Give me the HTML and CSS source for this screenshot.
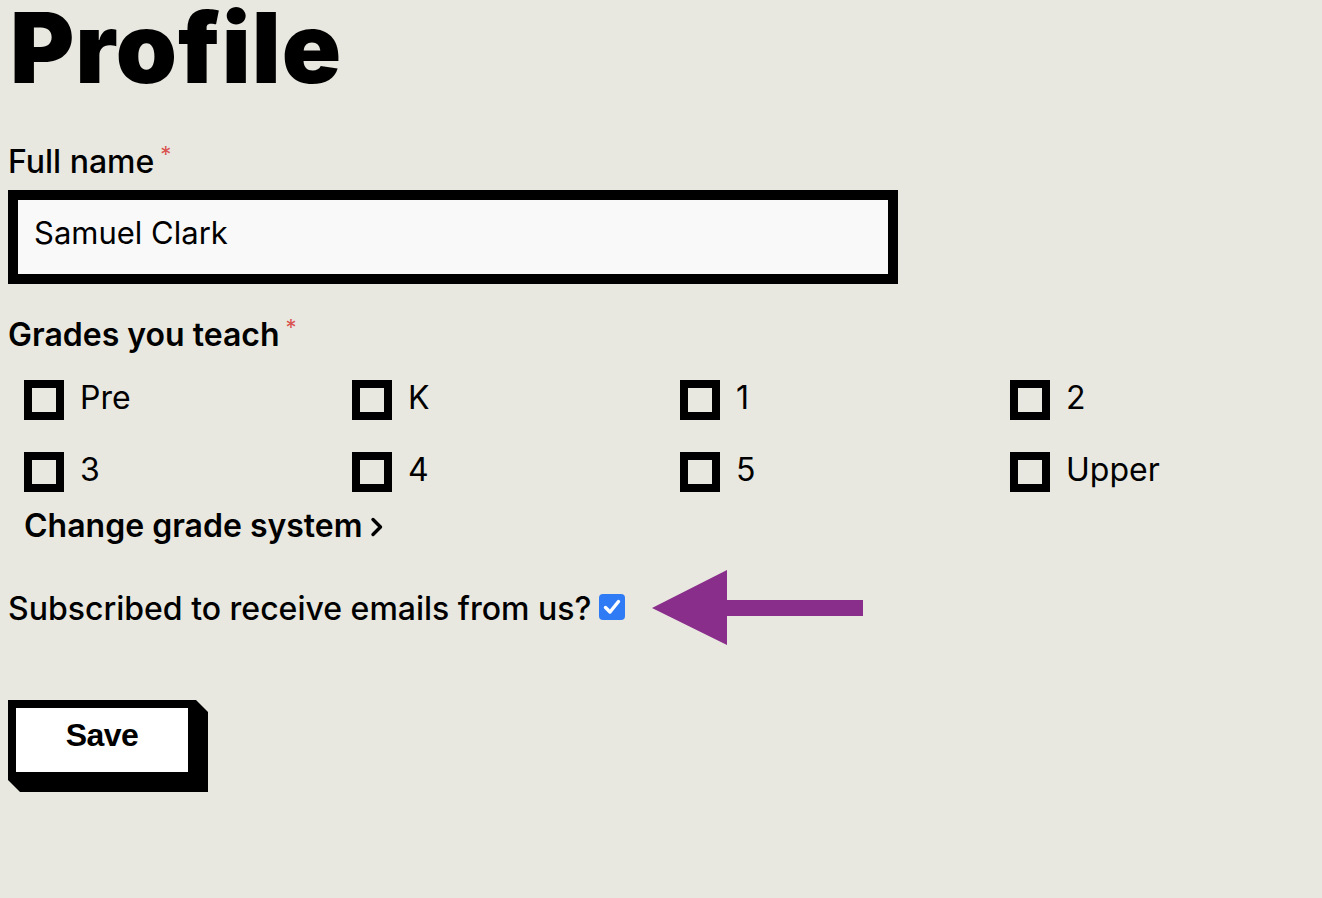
FILE: index.html
```html
<!DOCTYPE html>
<html lang="en">
<head>
<meta charset="utf-8">
<title>Profile</title>
<link rel="stylesheet" href="styles.css">
</head>
<body>
<main class="page">
  <h1 class="title">Profile</h1>
  <form class="form">
    <div class="field field-name">
      <label class="label" for="fullname">Full name<span class="req">*</span></label>
      <input class="text-input" id="fullname" type="text" value="Samuel Clark">
    </div>
    <div class="field field-grades">
      <div class="label label-strong">Grades you teach<span class="req">*</span></div>
      <div class="grades">
        <label class="grade"><span class="box"></span><span class="grade-text">Pre</span></label>
        <label class="grade"><span class="box"></span><span class="grade-text">K</span></label>
        <label class="grade"><span class="box"></span><span class="grade-text">1</span></label>
        <label class="grade"><span class="box"></span><span class="grade-text">2</span></label>
        <label class="grade"><span class="box"></span><span class="grade-text">3</span></label>
        <label class="grade"><span class="box"></span><span class="grade-text">4</span></label>
        <label class="grade"><span class="box"></span><span class="grade-text">5</span></label>
        <label class="grade"><span class="box"></span><span class="grade-text">Upper</span></label>
      </div>
      <a class="change-link" href="#">Change grade system<svg class="chevron" width="14" height="20" viewBox="0 0 14 20"><path d="M3 2.5 L10.5 10 L3 17.5" fill="none" stroke="#000" stroke-width="3.4" stroke-linecap="round" stroke-linejoin="round"/></svg></a>
    </div>
    <div class="subscribe">
      <span class="subscribe-text">Subscribed to receive emails from us?</span>
      <span class="checked-box"><svg width="26" height="26" viewBox="0 0 26 26"><path d="M6.5 13.5 L11 18 L19.5 7.5" fill="none" stroke="#fff" stroke-width="3.4" stroke-linecap="round" stroke-linejoin="round"/></svg></span>
      <svg class="arrow" width="212" height="76" viewBox="0 0 212 76"><polygon points="0,38 75,0 75,30 211,30 211,46 75,46 75,75" fill="#892e8a"/></svg>
    </div>
    <button class="save" type="button"><span class="save-face">Save</span></button>
  </form>
</main>
</body>
</html>
```

FILE: styles.css
```css
html, body {
  background: #e9e8e0;
}
body {
  margin: 0 8px 8px;
  font-family: Inter, "Noto Sans", sans-serif;
  color: #000;
}
.page {
  display: flex;
  flex-direction: column;
}
.title {
  margin: 0;
  font-size: 98px;
  line-height: 96px;
  font-weight: 900;
  letter-spacing: 1px;
  padding-left: 2px;
}
.form {
  display: flex;
  flex-direction: column;
}
.field {
  display: flex;
  flex-direction: column;
}
.field-name {
  margin-top: 48px;
}
.label {
  font-size: 32px;
  font-weight: 500;
  line-height: 36px;
}
.label-strong {
  font-weight: 600;
}
.req {
  color: #d9534f;
  font-size: 22px;
  font-weight: 400;
  vertical-align: top;
  margin-left: 6px;
  position: relative;
  top: -8px;
}
.text-input {
  margin-top: 10px;
  box-sizing: border-box;
  width: 890px;
  height: 94px;
  border: 10px solid #000;
  background: #f9f9f9;
  padding: 0 16px 10px;
  font-family: inherit;
  font-size: 31px;
  color: #000;
  outline: none;
  border-radius: 0;
}
.field-grades {
  margin-top: 33px;
}
.grades {
  margin-top: 27px;
  padding-left: 16px;
  display: grid;
  grid-template-columns: 328px 328px 330px 328px;
  row-gap: 32px;
}
.grade {
  display: flex;
  align-items: center;
  gap: 16px;
  height: 40px;
}
.box {
  box-sizing: border-box;
  width: 40px;
  height: 40px;
  border: 8px solid #000;
  flex: none;
}
.grade-text {
  font-size: 32px;
  font-weight: 400;
  position: relative;
  top: -3px;
}
.change-link {
  margin-top: 16px;
  margin-left: 16px;
  display: inline-flex;
  align-items: center;
  gap: 7px;
  align-self: flex-start;
  color: #000;
  text-decoration: none;
  font-size: 32px;
  font-weight: 600;
  line-height: 36px;
}
.chevron {
  position: relative;
  top: 1px;
}
.subscribe {
  margin-top: 44px;
  display: flex;
  align-items: center;
  height: 40px;
}
.subscribe-text {
  font-size: 32px;
  font-weight: 500;
}
.checked-box {
  margin-left: 8px;
  width: 26px;
  height: 26px;
  border-radius: 4px;
  background: #2f7bf5;
  display: flex;
  position: relative;
  top: -1px;
}
.arrow {
  margin-left: 27px;
  flex: none;
}
.save {
  margin-top: 72px;
  align-self: flex-start;
  width: 200px;
  height: 92px;
  padding: 8px 20px 20px 8px;
  border: 0;
  background: #000;
  clip-path: polygon(0 0, 188px 0, 200px 12px, 200px 92px, 12px 92px, 0 80px);
  cursor: pointer;
  display: flex;
}
.save-face {
  flex: 1;
  background: #fff;
  display: flex;
  align-items: center;
  justify-content: center;
  padding-bottom: 10px;
  font-family: inherit;
  font-size: 32px;
  font-weight: 800;
  letter-spacing: -0.5px;
  color: #000;
}
```
